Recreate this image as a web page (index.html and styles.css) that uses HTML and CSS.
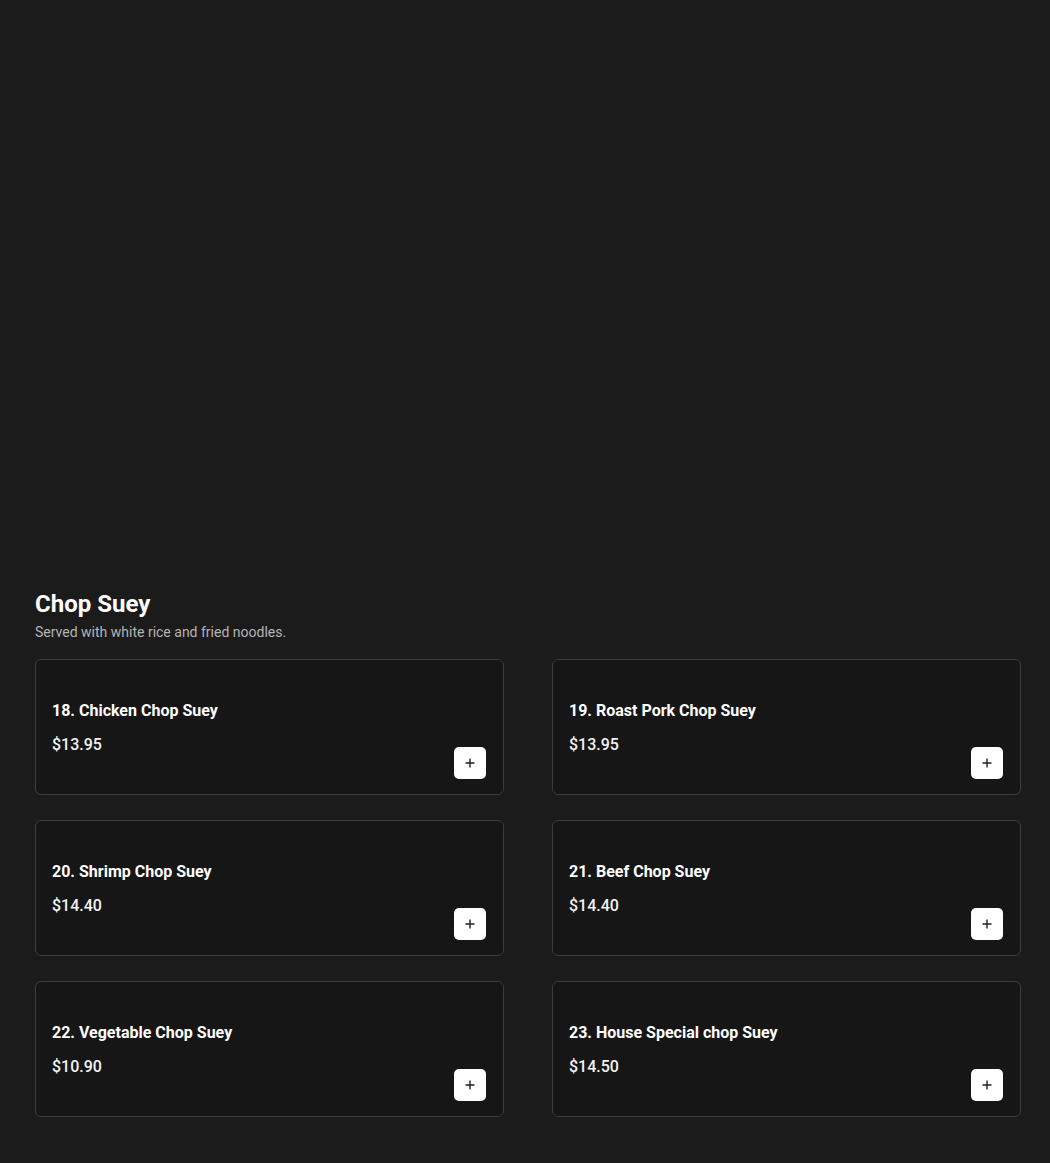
FILE: index.html
```html
<!DOCTYPE html>
<html lang="en">
<head>
<meta charset="utf-8">
<link rel="stylesheet" href="styles.css">
</head>
<body>
<div class="hero"></div>
<section class="category">
  <h2 class="cat-title">Chop Suey</h2>
  <p class="cat-desc">Served with white rice and fried noodles.</p>
  <div class="grid">
    <div class="card"><div class="info"><div class="name">18. Chicken Chop Suey</div><div class="price">$13.95</div></div><button class="add" aria-label="Add"><svg width="12" height="12" viewBox="0 0 12 12"><path d="M6 1.5v9M1.5 6h9" stroke="#222" stroke-width="1.4"/></svg></button></div>
    <div class="card"><div class="info"><div class="name">19. Roast Pork Chop Suey</div><div class="price">$13.95</div></div><button class="add" aria-label="Add"><svg width="12" height="12" viewBox="0 0 12 12"><path d="M6 1.5v9M1.5 6h9" stroke="#222" stroke-width="1.4"/></svg></button></div>
    <div class="card"><div class="info"><div class="name">20. Shrimp Chop Suey</div><div class="price">$14.40</div></div><button class="add" aria-label="Add"><svg width="12" height="12" viewBox="0 0 12 12"><path d="M6 1.5v9M1.5 6h9" stroke="#222" stroke-width="1.4"/></svg></button></div>
    <div class="card"><div class="info"><div class="name">21. Beef Chop Suey</div><div class="price">$14.40</div></div><button class="add" aria-label="Add"><svg width="12" height="12" viewBox="0 0 12 12"><path d="M6 1.5v9M1.5 6h9" stroke="#222" stroke-width="1.4"/></svg></button></div>
    <div class="card"><div class="info"><div class="name">22. Vegetable Chop Suey</div><div class="price">$10.90</div></div><button class="add" aria-label="Add"><svg width="12" height="12" viewBox="0 0 12 12"><path d="M6 1.5v9M1.5 6h9" stroke="#222" stroke-width="1.4"/></svg></button></div>
    <div class="card"><div class="info"><div class="name">23. House Special chop Suey</div><div class="price">$14.50</div></div><button class="add" aria-label="Add"><svg width="12" height="12" viewBox="0 0 12 12"><path d="M6 1.5v9M1.5 6h9" stroke="#222" stroke-width="1.4"/></svg></button></div>
  </div>
</section>
</body>
</html>
```
FILE: styles.css
```css
html, body {
  margin: 0;
  padding: 0;
  background: #1b1b1b;
  font-family: Roboto, "Liberation Sans", Arial, sans-serif;
  color: #fff;
}
.hero {
  height: 590px;
}
.category {
  padding: 0 29px 45px 35px;
}
.cat-title {
  margin: 0;
  font-size: 24px;
  line-height: 28px;
  font-weight: 700;
  color: #fff;
}
.cat-desc {
  margin: 4px 0 0;
  font-size: 14px;
  line-height: 20px;
  color: #b4b4b4;
}
.grid {
  margin-top: 17px;
  display: grid;
  grid-template-columns: 1fr 1fr;
  column-gap: 48px;
  row-gap: 25px;
}
.card {
  box-sizing: border-box;
  height: 136px;
  border: 1px solid #3c3c3c;
  border-radius: 6px;
  background: #161616;
  padding: 16px 17px 15px 16px;
  display: flex;
  justify-content: space-between;
  align-items: flex-end;
}
.info {
  align-self: flex-start;
  padding-top: 23px;
}
.name {
  font-size: 16px;
  line-height: 24px;
  font-weight: 700;
  color: #fff;
}
.price {
  margin-top: 10px;
  font-size: 16px;
  line-height: 24px;
  font-weight: 500;
  color: #f2f2f2;
}
.add {
  width: 32px;
  height: 32px;
  border: none;
  border-radius: 5px;
  background: #fff;
  padding: 0;
  display: flex;
  align-items: center;
  justify-content: center;
  cursor: pointer;
}
```
